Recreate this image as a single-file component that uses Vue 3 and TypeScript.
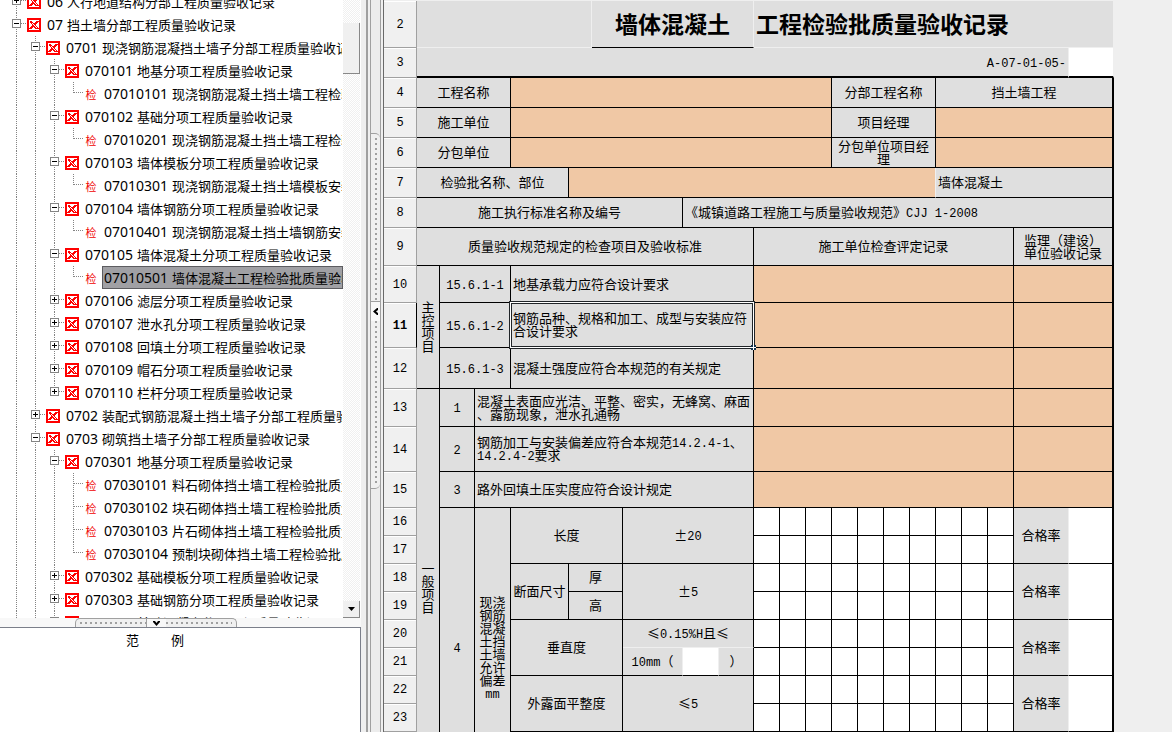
<script setup lang="ts">
interface Node {
  level: number
  code: string
  name: string
  kind: 'open' | 'closed' | 'leaf'
  last?: boolean
  selected?: boolean
}
interface Cell {
  text?: string
  cols?: number
  rows?: number
  look?: string
}
interface Row {
  label: number
  height: number
  cells: Cell[]
}

const nodes: Node[] = [
  { level: 0, code: '06', name: '人行地道结构分部工程质量验收记录', kind: 'closed' },
  { level: 0, code: '07', name: '挡土墙分部工程质量验收记录', kind: 'open' },
  { level: 1, code: '0701', name: '现浇钢筋混凝挡土墙子分部工程质量验收记录', kind: 'open' },
  { level: 2, code: '070101', name: '地基分项工程质量验收记录', kind: 'open' },
  { level: 3, code: '07010101', name: '现浇钢筋混凝土挡土墙工程检验批质量验收记录', kind: 'leaf', last: true },
  { level: 2, code: '070102', name: '基础分项工程质量验收记录', kind: 'open' },
  { level: 3, code: '07010201', name: '现浇钢筋混凝土挡土墙工程检验批质量验收记录', kind: 'leaf', last: true },
  { level: 2, code: '070103', name: '墙体模板分项工程质量验收记录', kind: 'open' },
  { level: 3, code: '07010301', name: '现浇钢筋混凝土挡土墙模板安装检验批质量验收记录', kind: 'leaf', last: true },
  { level: 2, code: '070104', name: '墙体钢筋分项工程质量验收记录', kind: 'open' },
  { level: 3, code: '07010401', name: '现浇钢筋混凝土挡土墙钢筋安装检验批质量验收记录', kind: 'leaf', last: true },
  { level: 2, code: '070105', name: '墙体混凝土分项工程质量验收记录', kind: 'open' },
  { level: 3, code: '07010501', name: '墙体混凝土工程检验批质量验收记录', kind: 'leaf', last: true, selected: true },
  { level: 2, code: '070106', name: '滤层分项工程质量验收记录', kind: 'closed' },
  { level: 2, code: '070107', name: '泄水孔分项工程质量验收记录', kind: 'closed' },
  { level: 2, code: '070108', name: '回填土分项工程质量验收记录', kind: 'closed' },
  { level: 2, code: '070109', name: '帽石分项工程质量验收记录', kind: 'closed' },
  { level: 2, code: '070110', name: '栏杆分项工程质量验收记录', kind: 'closed', last: true },
  { level: 1, code: '0702', name: '装配式钢筋混凝土挡土墙子分部工程质量验收记录', kind: 'closed' },
  { level: 1, code: '0703', name: '砌筑挡土墙子分部工程质量验收记录', kind: 'open' },
  { level: 2, code: '070301', name: '地基分项工程质量验收记录', kind: 'open' },
  { level: 3, code: '07030101', name: '料石砌体挡土墙工程检验批质量验收记录', kind: 'leaf' },
  { level: 3, code: '07030102', name: '块石砌体挡土墙工程检验批质量验收记录', kind: 'leaf' },
  { level: 3, code: '07030103', name: '片石砌体挡土墙工程检验批质量验收记录', kind: 'leaf' },
  { level: 3, code: '07030104', name: '预制块砌体挡土墙工程检验批质量验收记录', kind: 'leaf', last: true },
  { level: 2, code: '070302', name: '基础模板分项工程质量验收记录', kind: 'closed' },
  { level: 2, code: '070303', name: '基础钢筋分项工程质量验收记录', kind: 'closed' },
  { level: 2, code: '070304', name: '基础混凝土分项工程质量验收记录', kind: 'closed' },
]

const columns: number[] = [33, 23, 35, 36, 58, 23, 31, 60, 36, 35, ...Array<number>(10).fill(26), 55, 45]

const boxes: Cell[] = Array.from({ length: 10 }, () => ({ look: 'blank' }))
const rate: Cell[] = [
  { text: '合格率', rows: 2, look: 'soft-right' },
  { rows: 2, look: 'blank edge' },
]
const records: Cell[] = [{ cols: 10, look: 'fill' }, { cols: 2, look: 'fill edge' }]

const rows: Row[] = [
  { label: 2, height: 47, cells: [
    { cols: 5, look: 'soft-right soft-bottom' },
    { text: '墙体混凝土', cols: 4, look: 'title soft-right' },
    { text: '工程检验批质量验收记录', cols: 12, look: 'title left soft-right soft-bottom' },
  ] },
  { label: 3, height: 30, cells: [
    { text: 'A-07-01-05-', cols: 20, look: 'right soft-right thick-bottom' },
    { look: 'blank thick-bottom soft-right' },
  ] },
  { label: 4, height: 30, cells: [
    { text: '工程名称', cols: 3 }, { cols: 9, look: 'fill' }, { text: '分部工程名称', cols: 4 },
    { text: '挡土墙工程', cols: 5, look: 'edge' },
  ] },
  { label: 5, height: 30, cells: [
    { text: '施工单位', cols: 3 }, { cols: 9, look: 'fill' }, { text: '项目经理', cols: 4 },
    { cols: 5, look: 'fill edge' },
  ] },
  { label: 6, height: 30, cells: [
    { text: '分包单位', cols: 3 }, { cols: 9, look: 'fill' }, { text: '分包单位项目经\n理', cols: 4 },
    { cols: 5, look: 'fill edge' },
  ] },
  { label: 7, height: 30, cells: [
    { text: '检验批名称、部位', cols: 4 }, { cols: 12, look: 'fill soft-right' },
    { text: '墙体混凝土', cols: 5, look: 'left edge' },
  ] },
  { label: 8, height: 30, cells: [
    { text: '施工执行标准名称及编号', cols: 7 },
    { text: '《城镇道路工程施工与质量验收规范》CJJ 1-2008', cols: 14, look: 'left edge' },
  ] },
  { label: 9, height: 38, cells: [
    { text: '质量验收规范规定的检查项目及验收标准', cols: 9 }, { text: '施工单位检查评定记录', cols: 10 },
    { text: '监理（建设）\n单位验收记录', cols: 2, look: 'edge' },
  ] },
  { label: 10, height: 37, cells: [
    { text: '主\n控\n项\n目', rows: 3 }, { text: '15.6.1-1', cols: 2 },
    { text: '地基承载力应符合设计要求', cols: 6, look: 'left' }, ...records,
  ] },
  { label: 11, height: 45, cells: [
    { text: '15.6.1-2', cols: 2 },
    { text: '钢筋品种、规格和加工、成型与安装应符\n合设计要求', cols: 6, look: 'left active' }, ...records,
  ] },
  { label: 12, height: 41, cells: [
    { text: '15.6.1-3', cols: 2 },
    { text: '混凝土强度应符合本规范的有关规定', cols: 6, look: 'left' }, ...records,
  ] },
  { label: 13, height: 38, cells: [
    { text: '一\n般\n项\n目', rows: 13 }, { text: '1' },
    { text: '混凝土表面应光洁、平整、密实，无蜂窝、麻面\n、露筋现象，泄水孔通畅', cols: 7, look: 'left' }, ...records,
  ] },
  { label: 14, height: 45, cells: [
    { text: '2' },
    { text: '钢筋加工与安装偏差应符合本规范14.2.4-1、\n14.2.4-2要求', cols: 7, look: 'left' }, ...records,
  ] },
  { label: 15, height: 36, cells: [
    { text: '3' }, { text: '路外回填土压实度应符合设计规定', cols: 7, look: 'left' }, ...records,
  ] },
  { label: 16, height: 28, cells: [
    { text: '4', rows: 10 }, { text: '现浇\n钢筋\n混凝\n土挡\n土墙\n允许\n偏差\nmm', rows: 10 },
    { text: '长度', cols: 3, rows: 2 }, { text: '±20', cols: 3, rows: 2 }, ...boxes, ...rate,
  ] },
  { label: 17, height: 28, cells: boxes },
  { label: 18, height: 28, cells: [
    { text: '断面尺寸', rows: 2 }, { text: '厚', cols: 2 }, { text: '±5', cols: 3, rows: 2 }, ...boxes, ...rate,
  ] },
  { label: 19, height: 28, cells: [{ text: '高', cols: 2 }, ...boxes] },
  { label: 20, height: 28, cells: [
    { text: '垂直度', cols: 3, rows: 2 }, { text: '≤0.15%H且≤', cols: 3, look: 'soft-bottom' }, ...boxes, ...rate,
  ] },
  { label: 21, height: 28, cells: [
    { text: '10mm（', look: 'soft-right' }, { look: 'blank soft-right' }, { text: '）' }, ...boxes,
  ] },
  { label: 22, height: 28, cells: [
    { text: '外露面平整度', cols: 3, rows: 2 }, { text: '≤5', cols: 3, rows: 2 }, ...boxes, ...rate,
  ] },
  { label: 23, height: 28, cells: boxes },
  { label: 24, height: 28, cells: [{ cols: 3, rows: 2 }, { cols: 3, rows: 2 }, ...boxes, ...rate] },
  { label: 25, height: 28, cells: boxes },
]

function runs(text: string): { text: string; latin: boolean }[] {
  return (text.match(/[\x20-\x7e]+|[^\x20-\x7e]+/g) ?? []).map((t) => ({
    text: t,
    latin: /^[\x20-\x7e]/.test(t),
  }))
}
</script>

<template>
  <div class="app">
    <aside class="side">
      <div class="tree-pane">
        <ul class="tree">
          <li v-for="n in nodes" :key="n.code" class="node">
            <svg v-for="i in n.level" :key="i" class="guide" viewBox="0 0 19 23">
              <path class="dots" d="M9.5 0V23" />
            </svg>
            <svg v-if="n.kind === 'leaf'" class="guide" viewBox="0 0 19 23">
              <path class="dots" :d="n.last ? 'M9.5 0V11M10 10.5H19' : 'M9.5 0V23M10 10.5H19'" />
            </svg>
            <button v-else class="toggle" type="button" :aria-label="n.code">
              <svg class="guide" viewBox="0 0 19 23">
                <path class="dots" :d="n.last ? 'M9.5 0V11M14 10.5H19' : 'M9.5 0V23M14 10.5H19'" />
                <rect x="5.5" y="6.5" width="8" height="8" fill="#fff" stroke="#848484" />
                <path :d="n.kind === 'open' ? 'M7 10.5H12' : 'M7 10.5H12M9.5 8V13'" stroke="#000" />
              </svg>
            </button>
            <span v-if="n.kind === 'leaf'" class="mark">检</span>
            <svg v-else class="book" viewBox="0 0 14 14" shape-rendering="crispEdges">
              <rect width="14" height="14" fill="#f00" />
              <rect x="2" y="2" width="10" height="10" fill="#fff" />
              <path d="M3 3H5V4H6V5H8V4H9V3H12V4H11V5H10V6H9V8H10V9H11V10H12V11H8V10H7V9H6V10H5V11H2V10H3V9H4V8H5V6H4V5H3Z" fill="#f00" />
              <path d="M5 5H6V6H7V7H8V8H9V9H10V10H9V9H8V8H7V7H6V6H5Z" fill="#fff" />
            </svg>
            <span class="label" :class="{ selected: n.selected }"><span class="code">{{ n.code }}</span>{{ n.name }}</span>
          </li>
        </ul>
        <div class="scroll">
          <span class="thumb"></span>
          <button class="arrow" type="button" aria-label="向下">
            <svg viewBox="0 0 7 4" width="7" height="4"><path d="M0 0H7L3.500 4Z" fill="#000" /></svg>
          </button>
        </div>
      </div>
      <div class="split-h">
        <div class="grip-h">
          <i class="beads-h"></i>
          <button class="fold" type="button" aria-label="折叠">
            <svg viewBox="0 0 7 5" width="7" height="5"><path d="M0 0H2L3.500 2L5 0H7V1L3.500 5L0 1Z" fill="#000" /></svg>
          </button>
          <i class="beads-h"></i>
        </div>
      </div>
      <div class="sample"><span>范</span><span>例</span></div>
    </aside>

    <div class="split-v">
      <div class="grip-v">
        <i class="beads-v"></i>
        <button class="fold-v" type="button" aria-label="收起">
          <svg viewBox="0 0 5 7" width="5" height="7"><path d="M5 0V2L3 3.500L5 5V7H4L0 3.500L4 0Z" fill="#000" /></svg>
        </button>
        <i class="beads-v"></i>
      </div>
    </div>

    <main class="sheet">
      <table class="grid">
        <colgroup>
          <col v-for="(w, i) in columns" :key="i" :style="{ width: w + 'px' }" />
        </colgroup>
        <tbody>
          <tr v-for="row in rows" :key="row.label" :style="{ height: row.height + 'px' }">
            <th scope="row" :class="{ current: row.label === 11 }">{{ row.label }}</th>
            <td v-for="(c, i) in row.cells" :key="i" :colspan="c.cols ?? 1" :rowspan="c.rows ?? 1" :class="c.look"><span v-for="(r, j) in runs(c.text ?? '')" :key="j" :class="{ latin: r.latin }">{{ r.text }}</span></td>
          </tr>
        </tbody>
      </table>
    </main>
  </div>
</template>

<style>
body {
  margin: 0;
  overflow: hidden;
}
</style>

<style scoped>
.app {
  display: flex;
  height: 100vh;
  overflow: hidden;
  background: #efefef;
  color: #000;
  font-family: "Noto Sans CJK SC", sans-serif;
  font-size: 13px;
  text-spacing-trim: space-all;
}
button {
  margin: 0;
  padding: 0;
  border: 0;
  background: none;
}
svg {
  display: block;
}
.side {
  display: flex;
  flex: 0 0 361px;
  flex-direction: column;
  min-width: 0;
  background: #f8f8f8;
}
.tree-pane {
  display: flex;
  flex: 1;
  min-height: 0;
  padding-right: 1px;
  overflow: hidden;
  background: #fff;
}
.tree {
  flex: 1;
  min-width: 0;
  margin: -10px 0 0;
  padding: 0 0 0 7px;
  overflow: hidden;
  list-style: none;
}
.node {
  display: flex;
  align-items: center;
  height: 23px;
}
.guide {
  flex: none;
  width: 19px;
  height: 23px;
  fill: none;
}
.dots {
  stroke: #848484;
  stroke-dasharray: 1 1;
}
.toggle,
.book,
.mark {
  flex: none;
}
.book,
.mark {
  width: 14px;
  margin: 0 4px 0 1px;
}
.book {
  height: 14px;
}
.mark {
  color: #f00000;
  font-size: 11px;
  line-height: 14px;
  text-align: center;
}
.label {
  flex: 1;
  min-width: 0;
  padding: 0 1px;
  border: 1px solid transparent;
  overflow: hidden;
  line-height: 21px;
  white-space: pre;
}
.label.selected {
  border-color: #5c5c60;
  background: #a0a0a4;
}
.code {
  margin-right: 4px;
  font-family: "Noto Sans", sans-serif;
  font-size: 14px;
  line-height: 0;
}
.scroll {
  display: flex;
  flex: 0 0 17px;
  flex-direction: column;
  justify-content: space-between;
  background: repeating-conic-gradient(#fff 0 25%, #f0f0f0 0 50%) 0 0 / 2px 2px;
}
.thumb {
  height: 50px;
  margin-top: 23px;
  border-right: 1px solid #888;
  border-bottom: 1px solid #888;
  background: #f0f0f0;
}
.arrow {
  display: grid;
  place-items: center;
  height: 17px;
  border-right: 1px solid #888;
  border-bottom: 1px solid #888;
  background: #f0f0f0;
}
.split-h {
  flex: 0 0 9px;
  padding-left: 75px;
}
.grip-h {
  display: flex;
  align-items: center;
  box-sizing: border-box;
  width: 162px;
  height: 9px;
  padding: 0 4px;
  border: 1px solid #a0a0a0;
  border-bottom: 0;
  border-radius: 5px 5px 0 0;
  background: #f0f0f0;
}
.beads-h {
  flex: 1;
  height: 2px;
  background: repeating-linear-gradient(to right, #a0a0a0 0 2px, transparent 2px 5px);
}
.fold {
  display: grid;
  place-items: center;
  width: 20px;
  height: 8px;
  border-left: 1px solid #a0a0a0;
  background: #f8f8f8;
}
.sample {
  display: flex;
  flex: 0 0 104px;
  gap: 32px;
  padding-left: 126px;
  border-top: 1px solid #7b7f8a;
  border-right: 1px solid #7b7f8a;
  background: #fff;
  line-height: 24px;
}
.split-v {
  display: flex;
  flex: 0 0 9px;
  flex-direction: column;
  justify-content: flex-start;
  margin-left: 5px;
  padding-top: 133px;
  padding-left: 3px;
  border-left: 2px solid #a0a0a0;
  border-right: 1px solid #a0a0a0;
  background: linear-gradient(to right, #f0f0f0 2px, #a0a0a0 2px 3px, #ececec 3px);
}
.grip-v {
  display: flex;
  flex-direction: column;
  align-items: center;
  box-sizing: border-box;
  height: 356px;
  padding: 4px 0;
  border: 1px solid #a0a0a0;
  border-right: 0;
  border-left: 0;
  border-radius: 0 5px 5px 0;
  background: #f0f0f0;
}
.beads-v {
  flex: 1;
  width: 2px;
  background: repeating-linear-gradient(#a0a0a0 0 2px, transparent 2px 5px);
}
.fold-v {
  display: grid;
  place-items: center;
  width: 100%;
  height: 20px;
  border-top: 1px solid #a0a0a0;
  background: #f8f8f8;
}
.sheet {
  flex: 1;
  min-width: 0;
  margin-left: 2px;
  padding-top: 1px;
  overflow: hidden;
  border-left: 1px solid #696969;
  background: #efefef;
}
.grid {
  width: 730px;
  table-layout: fixed;
  border-collapse: separate;
  border-spacing: 0;
  line-height: 13px;
}
th,
td {
  box-sizing: border-box;
  border: 0 solid #000;
  border-right-width: 1px;
  border-bottom-width: 1px;
  font-weight: 400;
  text-align: center;
  vertical-align: middle;
  white-space: pre;
}
th {
  padding: 2px 2px 0;
  border-color: #a0a0a0;
  background: #f0f0f0;
  box-shadow: inset 0 1px #fff;
  font-family: "Liberation Mono", monospace;
  font-size: 12px;
}
th.current {
  border-right-color: #000;
  font-weight: 700;
}
td {
  padding: 0 2px 2px;
  background: #dfdfdf;
}
td.fill {
  background: #f0c8a5;
}
td.blank {
  background: #fff;
}
td.left {
  text-align: left;
}
td.right {
  text-align: right;
}
td.title {
  font-size: 23px;
  font-weight: 700;
  line-height: 28px;
}
td.soft-right {
  border-right-color: #efefef;
}
td.soft-bottom {
  border-bottom-color: #efefef;
}
td.thick-bottom {
  border-bottom-width: 2px;
}
td.edge {
  border-right-width: 2px;
}
td.active {
  position: relative;
}
td.active::before {
  position: absolute;
  inset: -1px;
  border: 1px solid #fff;
  outline: 1px solid #202428;
  box-shadow: inset 0 0 0 1px #202428;
  content: "";
}
td.active::after {
  position: absolute;
  right: -3px;
  bottom: -3px;
  width: 5px;
  height: 5px;
  background: linear-gradient(#fff, #fff) 2px 0 / 1px 5px no-repeat, linear-gradient(#fff, #fff) 0 2px / 5px 1px no-repeat, #12304c;
  content: "";
}
.latin {
  font-family: "Liberation Mono", monospace;
  font-size: 12px;
  line-height: 0;
}
</style>
